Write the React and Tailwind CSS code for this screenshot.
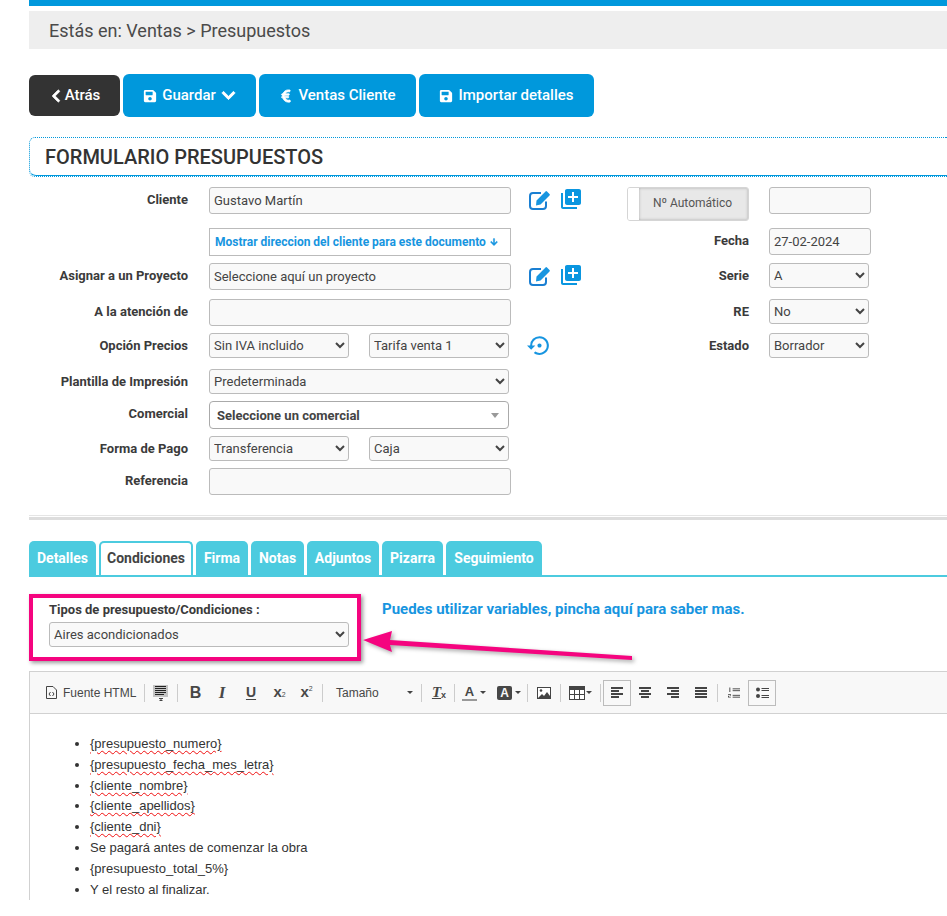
import React from "react";
import { FaChevronLeft, FaChevronDown, FaSave, FaEuroSign, FaArrowDown } from "react-icons/fa";
import { MdLibraryAdd, MdSettingsBackupRestore } from "react-icons/md";

const inputCls = "h-[27px] w-full rounded-[3px] border border-[#bbbbbb] bg-[#f9f9f9] px-[4px] text-[13px] text-[#444] outline-none";
const selectCls = "h-[25px] rounded-[3px] border border-[#bbbbbb] bg-[#f9f9f9] text-[13px] text-[#444] outline-none";
const labelCls = "text-right text-[13px] font-bold leading-[16px] text-[#3b3b3b]";

function Row({ h, label, content, icons, rightLabel, right }) {
  return (
    <div className={"flex items-start " + h}>
      <div className={"w-[159px] shrink-0 pt-[5px] " + labelCls}>{label}</div>
      <div className="ml-[21px] w-[302px] shrink-0">{content}</div>
      <div className="ml-[18px] flex h-[27px] w-[98px] shrink-0 items-center gap-[8px] text-[#1795e0]">{icons}</div>
      <div className={"w-[122px] shrink-0 pt-[5px] " + labelCls}>{rightLabel}</div>
      <div className="ml-[20px] w-[102px] shrink-0">{right}</div>
    </div>
  );
}

function Sel({ w, value }) {
  return (
    <select defaultValue={value} className={selectCls + " " + w}>
      <option>{value}</option>
    </select>
  );
}

const EditIcons = () => (
  <>
    <svg className="-mt-[1px] shrink-0" width="22" height="20" viewBox="0 0 22 20">
      <path d="M17 11.500v4.500a3 3 0 0 1-3 3H4a3 3 0 0 1-3-3V6a3 3 0 0 1 3-3h8" fill="none" stroke="#1a7fd2" strokeWidth="2" />
      <path d="M7.500 10.500L16.500 1.500a1 1 0 0 1 1.500 0L20.500 4a1 1 0 0 1 0 1.500L11.500 14.500L7 15.500z" fill="#1795e0" />
    </svg>
    <MdLibraryAdd className="-mt-[3px] size-[24px] shrink-0 text-[#0a96e0]" />
  </>
);

function Btn({ w, dark, children }) {
  return (
    <div className={"flex items-center justify-center gap-[5px] rounded-[6px] text-[15px] font-medium text-white " + w + " " + (dark ? "h-[41px] bg-[#333333]" : "h-[43px] bg-[#0098dc]")}>
      {children}
    </div>
  );
}

function Tab({ w, active, children }) {
  return active ? (
    <div className={"h-[34px] rounded-t-[5px] border-x-2 border-t-2 border-[#4ccbdf] bg-white pt-[5px] text-center text-[14px] font-bold text-[#444] " + w}>{children}</div>
  ) : (
    <div className={"h-[34px] rounded-t-[5px] bg-[#4ccbdf] pt-[7px] text-center text-[14px] font-bold text-white " + w}>{children}</div>
  );
}

const Sep = ({ c }) => <div className={"h-[18px] w-px shrink-0 bg-[#cccccc] " + c} />;
const Caret = ({ c }) => <div className={"h-0 w-0 shrink-0 border-x-[3px] border-t-[3px] border-x-transparent border-t-[#444] " + c} />;
const Cell = ({ c, children }) => <div className={"flex shrink-0 items-center justify-center " + c}>{children}</div>;

function Lines({ kind }) {
  const rows = {
    left: [[0, 12], [0, 8], [0, 12], [0, 8]],
    center: [[0, 12], [2, 8], [0, 12], [2, 8]],
    right: [[0, 12], [4, 8], [0, 12], [4, 8]],
    just: [[0, 12], [0, 12], [0, 12], [0, 12]],
  }[kind];
  return (
    <svg width="12" height="12" viewBox="0 0 12 12" fill="#444">
      {rows.map(([x, w], i) => <rect key={i} x={x} y={i * 3} width={w} height="2" />)}
    </svg>
  );
}

const tbText = "font-['Liberation_Sans',sans-serif]";

function Toolbar() {
  return (
    <div className="flex h-[42px] items-center border-b border-[#d1d1d1] bg-[#f8f8f8] text-[#474747]">
      <Cell c="ml-[16px] w-[11px]">
        <svg width="11" height="13" viewBox="0 0 11 13" fill="none" stroke="#444" strokeWidth="1">
          <path d="M.5 .5h6.500l3.500 3.500v8.500H.5z" />
          <path d="M4.500 6L3 8l1.500 2M6.500 6L8 8l-1.500 2" />
        </svg>
      </Cell>
      <div className={"ml-[6px] w-[75px] shrink-0 text-[12px] " + tbText}>Fuente HTML</div>
      <Sep c="ml-[6px]" />
      <Cell c="ml-[8px] w-[15px]">
        <svg width="15" height="16" viewBox="0 0 15 16">
          <rect width="15" height="12" fill="#c4c4c4" />
          <path d="M2 1.500h11M2 3.500h11M2 5.500h11M2 7.500h11M2 9.500h9" stroke="#222" strokeWidth="1" />
          <path d="M6 13.500h4M8 13.500v2M6.500 15.500h3" stroke="#444" strokeWidth="1" />
        </svg>
      </Cell>
      <Sep c="ml-[9px]" />
      <Cell c={"ml-[12px] w-[11px] text-[16px] font-bold " + tbText}>B</Cell>
      <Cell c="ml-[16px] w-[10px] font-['Liberation_Serif',serif] text-[17px] font-bold italic">I</Cell>
      <Cell c={"ml-[19px] w-[10px] text-[14px] font-bold underline underline-offset-2 " + tbText}>U</Cell>
      <Cell c={"ml-[16px] w-[15px] text-[15px] font-bold " + tbText}>x<span className="mt-[6px] text-[7px] font-normal">2</span></Cell>
      <Cell c={"ml-[12px] w-[15px] text-[15px] font-bold " + tbText}>x<span className="-mt-[6px] text-[7px] font-normal">2</span></Cell>
      <Sep c="ml-[8px]" />
      <div className={"ml-[13px] w-[45px] shrink-0 text-[12px] " + tbText}>Tamaño</div>
      <Caret c="ml-[26px]" />
      <Sep c="ml-[8px]" />
      <Cell c="ml-[10px] w-[14px] font-['Liberation_Serif',serif] text-[15px] font-bold italic">
        <span className="underline">T</span><span className={"mt-[6px] text-[9px] not-italic " + tbText}>x</span>
      </Cell>
      <Sep c="ml-[8px]" />
      <div className={"ml-[7px] flex w-[15px] shrink-0 flex-col items-center border-b-2 border-[#999] text-[13px] font-bold leading-[14px] " + tbText}>A</div>
      <Caret c="ml-[3px]" />
      <Cell c={"ml-[11px] h-[14px] w-[15px] rounded-[2px] bg-[#474747] text-[12px] font-bold text-[#f8f8f8] " + tbText}>A</Cell>
      <Caret c="ml-[3px]" />
      <Sep c="ml-[6px]" />
      <Cell c="ml-[9px] w-[14px]">
        <svg width="14" height="12" viewBox="0 0 14 12">
          <rect x=".5" y=".5" width="13" height="11" fill="#fff" stroke="#444" />
          <circle cx="4" cy="3.500" r="1.300" fill="#444" />
          <path d="M1 11l4-4 2 2 3-4 3 4v2z" fill="#444" />
        </svg>
      </Cell>
      <Sep c="ml-[9px]" />
      <Cell c="ml-[8px] w-[16px]">
        <svg width="16" height="14" viewBox="0 0 16 14">
          <rect x=".5" y=".5" width="15" height="13" fill="#fff" stroke="#444" />
          <rect width="16" height="4" fill="#444" />
          <path d="M5.500 4v10M10.500 4v10M0 8.500h16" stroke="#444" />
        </svg>
      </Cell>
      <Caret c="ml-[1px]" />
      <Sep c="ml-[8px]" />
      <Cell c="ml-[2px] h-[26px] w-[28px] border border-[#bcbcbc]"><Lines kind="left" /></Cell>
      <Cell c="ml-[8px] w-[12px]"><Lines kind="center" /></Cell>
      <Cell c="ml-[16px] w-[12px]"><Lines kind="right" /></Cell>
      <Cell c="ml-[16px] w-[12px]"><Lines kind="just" /></Cell>
      <Sep c="ml-[10px]" />
      <Cell c="ml-[10px] w-[12px]">
        <svg width="13" height="12" viewBox="0 0 13 12" fill="#444">
          <rect x="5" y="1" width="8" height="1" /><rect x="5" y="3" width="8" height="1" />
          <rect x="5" y="8" width="8" height="1" /><rect x="5" y="10" width="8" height="1" />
          <path d="M1.500 0h1v5h-1zM0 7h3v2H1v1h2v1H0V9h2V8H0z" />
        </svg>
      </Cell>
      <Cell c="ml-[8px] h-[26px] w-[28px] border border-[#bcbcbc]">
        <svg width="13" height="12" viewBox="0 0 13 12" fill="#444">
          <circle cx="2" cy="2.500" r="2" /><circle cx="2" cy="9" r="2" />
          <rect x="5.500" y="1" width="7.500" height="1" /><rect x="5.500" y="3" width="7.500" height="1" />
          <rect x="5.500" y="8" width="7.500" height="1" /><rect x="5.500" y="10" width="7.500" height="1" />
        </svg>
      </Cell>
    </div>
  );
}

const spell = "underline decoration-wavy decoration-[#f01010] decoration-1 underline-offset-[2px]";
const items = [
  ["{presupuesto_numero}", true],
  ["{presupuesto_fecha_mes_letra}", true],
  ["{cliente_nombre}", true],
  ["{cliente_apellidos}", true],
  ["{cliente_dni}", true],
  ["Se pagará antes de comenzar la obra", false],
  ["{presupuesto_total_5%}", false],
  ["Y el resto al finalizar.", false],
];

const heavy = "stroke-current stroke-[30]";

export default function App() {
  return (
    <div className="relative h-[916px] overflow-hidden bg-white pl-[29px] font-['Roboto',sans-serif]">
      <div className="h-[6px] bg-[#0098dc]" />
      <div className="mt-[5px] flex h-[38px] items-center bg-[#eeeeee] pl-[20px] text-[18px] text-[#4a4a4a]">Estás en: Ventas &gt; Presupuestos</div>

      <div className="mt-[25px] flex h-[43px] items-center gap-[3px]">
        <Btn w="w-[91px]" dark><FaChevronLeft className={"size-[14px] " + heavy} /><span className="-ml-[3px]">Atrás</span></Btn>
        <Btn w="w-[133px]"><FaSave className="size-[14px]" /><span>Guardar</span><FaChevronDown className={"size-[15px] " + heavy} /></Btn>
        <Btn w="w-[157px]"><FaEuroSign className={"size-[14px] " + heavy} /><span>Ventas Cliente</span></Btn>
        <Btn w="w-[175px]"><FaSave className="size-[14px]" /><span>Importar detalles</span></Btn>
      </div>

      <div className="mt-[20px] h-[40px] rounded-l-[6px] border-t border-l border-b border-dotted border-[#0098dc]">
        <div className="flex h-[38px] items-center rounded-bl-[6px] border-b border-[#0098dc] pl-[15px] text-[20px] font-medium text-[#333]">FORMULARIO PRESUPUESTOS</div>
      </div>

      <div className="mt-[10px]">
        <Row h="h-[41px]" label="Cliente"
          content={<input defaultValue="Gustavo Martín" className={inputCls} />}
          icons={<EditIcons />}
          rightLabel={
            <div className="-mt-[5px] flex h-[34px] w-[122px] overflow-hidden rounded-[3px] border border-[#d5d5d5]">
              <div className="w-[11px] bg-white" />
              <div className="flex flex-1 items-center justify-center bg-[#e8e8e8] pb-[2px] pr-[2px] text-[12px] font-normal text-[#555] shadow-[inset_0_0_3px_#aaa]">Nº Automático</div>
            </div>
          }
          right={<input className={inputCls} />} />
        <Row h="h-[35px]" label=""
          content={
            <div className="flex h-[28px] w-full items-center gap-[4px] border border-[#bbbbbb] bg-white pl-[5px] text-[12px] font-bold text-[#1795e0]">
              Mostrar direccion del cliente para este documento <FaArrowDown className={"size-[8px] " + heavy} />
            </div>
          }
          rightLabel="Fecha"
          right={<input defaultValue="27-02-2024" className={inputCls} />} />
        <Row h="h-[36px]" label="Asignar a un Proyecto"
          content={<input defaultValue="Seleccione aquí un proyecto" className={inputCls} />}
          icons={<EditIcons />}
          rightLabel="Serie"
          right={<Sel w="w-[100px]" value="A" />} />
        <Row h="h-[34px]" label="A la atención de"
          content={<input className={inputCls} />}
          rightLabel="RE"
          right={<Sel w="w-[100px]" value="No" />} />
        <Row h="h-[36px]" label="Opción Precios"
          content={<div className="flex w-[300px] justify-between"><Sel w="w-[140px]" value="Sin IVA incluido" /><Sel w="w-[140px]" value="Tarifa venta 1" /></div>}
          icons={<MdSettingsBackupRestore className="-ml-[2px] -mt-[2px] size-[25px]" />}
          rightLabel="Estado"
          right={<Sel w="w-[100px]" value="Borrador" />} />
        <Row h="h-[32px]" label="Plantilla de Impresión"
          content={<Sel w="w-[300px]" value="Predeterminada" />} />
        <Row h="h-[35px]" label="Comercial"
          content={
            <div className="flex h-[28px] w-[300px] items-center justify-between rounded-[4px] border border-[#aaaaaa] bg-white pl-[7px] pr-[9px] pt-px text-[13px] font-bold text-[#444]">
              Seleccione un comercial
              <div className="h-0 w-0 border-x-[4px] border-t-[5px] border-x-transparent border-t-[#999]" />
            </div>
          } />
        <Row h="h-[32px]" label="Forma de Pago"
          content={<div className="flex w-[300px] justify-between"><Sel w="w-[140px]" value="Transferencia" /><Sel w="w-[140px]" value="Caja" /></div>} />
        <Row h="h-[27px]" label="Referencia"
          content={<input className={inputCls} />} />
      </div>

      <div className="mt-[20px] h-[5px] border-t border-[#e5e5e5] pt-px"><div className="h-[3px] bg-[#dddddd]" /></div>

      <div className="mt-[21px] flex h-[36px] items-start gap-[3px] border-b-2 border-[#4ccbdf]">
        <Tab w="w-[67px]">Detalles</Tab>
        <Tab w="w-[94px]" active>Condiciones</Tab>
        <Tab w="w-[52px]">Firma</Tab>
        <Tab w="w-[53px]">Notas</Tab>
        <Tab w="w-[72px]">Adjuntos</Tab>
        <Tab w="w-[61px]">Pizarra</Tab>
        <Tab w="w-[96px]">Seguimiento</Tab>
      </div>

      <div className="mt-[17px] flex items-start">
        <div className="h-[67px] w-[332px] border-[4px] border-[#f5047f] pl-[16px] pt-[4px] shadow-[2px_2px_4px_rgba(0,0,0,0.4)]">
          <div className="text-[13px] font-bold leading-[16px] text-[#3b3b3b]">Tipos de presupuesto/Condiciones :</div>
          <div className="mt-[4px]"><Sel w="w-[300px]" value="Aires acondicionados" /></div>
        </div>
        <div className="ml-[21px] pt-[4px] text-[15px] font-bold text-[#1795e0]">Puedes utilizar variables, pincha aquí para saber mas.</div>
      </div>

      <div className="mt-[10px] border-t border-l border-[#d1d1d1]">
        <Toolbar />
        <ul className="list-disc pl-[60px] pt-[20px] font-['Liberation_Sans',sans-serif] text-[13px] leading-[20.8px] text-[#333]">
          {items.map(([t, s]) => (
            <li key={t}><span className={s ? spell : ""}>{t}</span></li>
          ))}
        </ul>
      </div>

      <svg className="absolute left-[355px] top-[625px] [filter:drop-shadow(2px_2px_2px_rgba(0,0,0,0.35))]" width="285" height="42" viewBox="0 0 285 42">
        <path d="M8 15 L37 6 L35 15 L277 31 L277 35 L35 20 L37 27 Z" fill="#f5047f" />
      </svg>
    </div>
  );
}
